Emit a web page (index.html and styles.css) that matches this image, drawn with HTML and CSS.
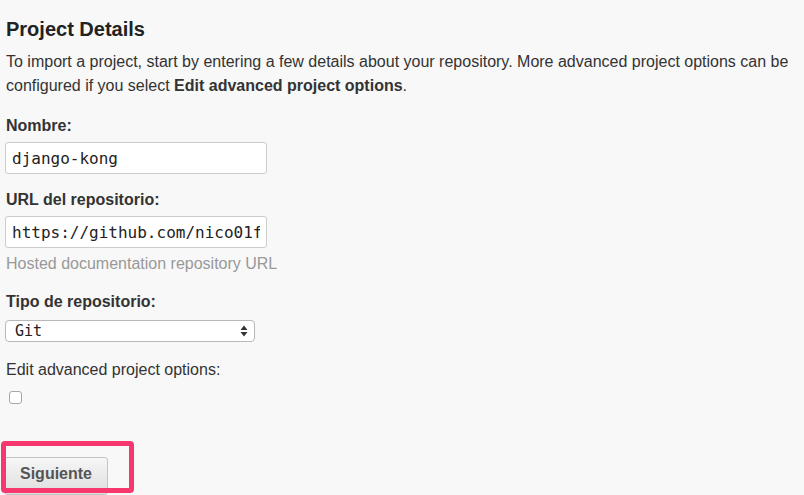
FILE: index.html
```html
<!DOCTYPE html>
<html>
<head>
<meta charset="utf-8">
<link rel="stylesheet" href="styles.css">
</head>
<body>
<div class="page">
  <h2 class="title">Project Details</h2>
  <p class="intro">To import a project, start by entering a few details about your repository. More advanced project options can be configured if you select <strong>Edit advanced project options</strong>.</p>
  <form class="form">
    <div class="field">
      <label class="label">Nombre:</label>
      <input class="text-input" type="text" value="django-kong">
    </div>
    <div class="field">
      <label class="label">URL del repositorio:</label>
      <input class="text-input" type="text" value="https://github.com/nico01f/django-kong">
      <span class="help">Hosted documentation repository URL</span>
    </div>
    <div class="field field-select">
      <label class="label">Tipo de repositorio:</label>
      <div class="select">
        <span class="select-value">Git</span>
        <svg class="select-arrows" width="8" height="12" viewBox="0 0 8 12"><path d="M4 0.5 L7.5 5 L0.5 5 Z M0.5 7 L7.5 7 L4 11.5 Z" fill="#333"/></svg>
      </div>
    </div>
    <div class="field">
      <label class="label normal">Edit advanced project options:</label>
      <span class="checkbox"></span>
    </div>
    <div class="actions">
      <button class="button" type="button">Siguiente</button>
      <div class="highlight"></div>
    </div>
  </form>
</div>
</body>
</html>
```
FILE: styles.css
```css
html, body {
  margin: 0;
  padding: 0;
  background: #f8f8f8;
}
body {
  font-family: "Liberation Sans", Arial, sans-serif;
  font-size: 16px;
  color: #333;
  height: 495px;
  overflow: hidden;
}
.page {
  padding: 17px 0 0 6px;
}
.title {
  margin: 0;
  font-size: 20px;
  line-height: 24px;
  font-weight: bold;
  color: #222;
}
.intro {
  margin: 9px 0 0 0;
  line-height: 24px;
  width: 796px;
}
.form {
  margin: 16px 0 0 0;
  display: flex;
  flex-direction: column;
}
.field {
  display: flex;
  flex-direction: column;
  align-items: flex-start;
  margin-bottom: 14px;
}
.field-select {
  margin-bottom: 16px;
}
.label {
  font-weight: bold;
  line-height: 24px;
  margin-bottom: 4px;
}
.label.normal {
  font-weight: normal;
  margin-bottom: 9px;
}
.text-input {
  box-sizing: border-box;
  width: 262px;
  height: 32px;
  margin-left: -1px;
  padding: 0 6px;
  border: 1px solid #ccc;
  border-radius: 3px;
  background: #fff;
  font-family: "DejaVu Sans Mono", Menlo, monospace;
  font-size: 16px;
  color: #222;
  outline: none;
}
.help {
  color: #999;
  line-height: 24px;
  margin-top: 4px;
  margin-bottom: 0;
}
.select {
  box-sizing: border-box;
  width: 250px;
  height: 22px;
  margin: 2px 0 0 -1px;
  padding: 0 9px;
  border: 1px solid #b8b8b8;
  border-radius: 4px;
  background: #fff;
  display: flex;
  align-items: center;
  justify-content: space-between;
}
.select-value {
  font-family: "DejaVu Sans Mono", Menlo, monospace;
  font-size: 15px;
  color: #222;
}
.select-arrows {
  margin-right: -3px;
}
.checkbox {
  box-sizing: border-box;
  width: 13px;
  height: 13px;
  margin-left: 3px;
  border: 1px solid #a8a8a8;
  border-radius: 3px;
  background: #fff;
}
.actions {
  position: relative;
  margin-top: 39px;
}
.button {
  margin-left: -2px;
  height: 38px;
  padding: 0 15px 4px 15px;
  border: 1px solid #c4c4c4;
  border-radius: 3px;
  background: linear-gradient(#f6f6f6, #dedede);
  font-family: "Liberation Sans", Arial, sans-serif;
  font-size: 16px;
  font-weight: bold;
  color: #555;
}
.highlight {
  position: absolute;
  left: -5px;
  top: -16px;
  width: 133px;
  height: 52px;
  box-sizing: border-box;
  border: 5px solid #f6386f;
  border-radius: 4px;
}
```
